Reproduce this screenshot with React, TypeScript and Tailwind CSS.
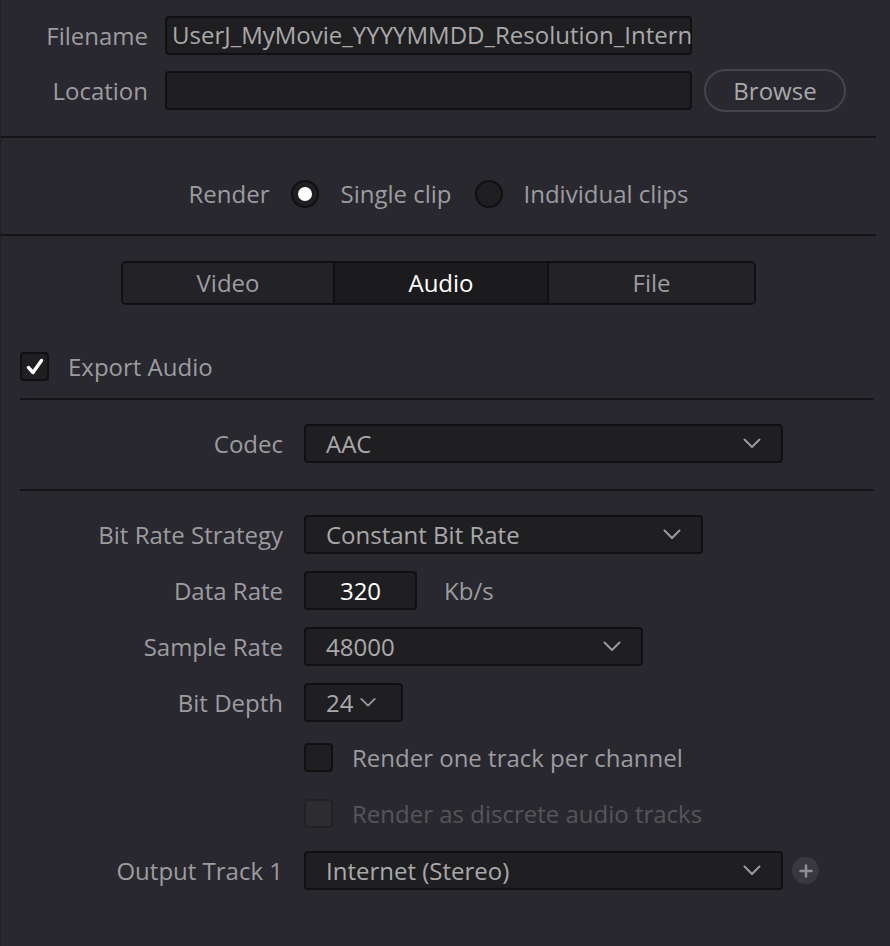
import React from 'react';

const Chevron = ({ className = '' }: { className?: string }) => (
  <svg width="18" height="11" viewBox="0 0 18 11" className={className} fill="none">
    <path d="M1.5 1.5 L9 9 L16.5 1.5" stroke="#9a9a9e" strokeWidth="2" strokeLinecap="round" strokeLinejoin="round" />
  </svg>
);

const Select = ({ value, width }: { value: string; width: string }) => (
  <div className={`${width} h-[39px] flex items-center justify-between pl-[20px] pr-[20px] bg-[#1f1f21] border-2 border-[#101012] rounded-[4px] text-[#a9a9ab]`}>
    <span>{value}</span>
    <Chevron />
  </div>
);

const Row = ({ label, children, className = '' }: { label: string; children: React.ReactNode; className?: string }) => (
  <div className={`flex items-center ${className}`}>
    <div className="w-[282px] text-right text-[#9c9ca0] shrink-0">{label}</div>
    <div className="ml-[21px] flex items-center">{children}</div>
  </div>
);

const Checkbox = ({ checked = false, disabled = false }: { checked?: boolean; disabled?: boolean }) => (
  <div
    className={`w-[29px] h-[29px] rounded-[4px] border-2 flex items-center justify-center shrink-0 ${
      disabled ? 'bg-[#2c2c31] border-[#222226]' : 'bg-[#1f1f21] border-[#101012]'
    }`}
  >
    {checked && (
      <svg width="20" height="20" viewBox="0 0 20 20" fill="none">
        <path d="M3.5 10.5 L8 15.5 L16.5 3.5" stroke="#ffffff" strokeWidth="3.4" strokeLinecap="round" strokeLinejoin="round" />
      </svg>
    )}
  </div>
);

const Radio = ({ selected = false }: { selected?: boolean }) => (
  <div className="w-[28px] h-[28px] rounded-full bg-[#1f1f21] border-2 border-[#101012] flex items-center justify-center shrink-0">
    {selected && <div className="w-[14px] h-[14px] rounded-full bg-white" />}
  </div>
);

export default function App() {
  return (
    <div
      className="w-[890px] h-[946px] bg-[#28282e] border-l border-[#1f1f24] text-[24px] leading-none overflow-hidden"
      style={{ fontFamily: '"Open Sans", "Noto Sans", sans-serif' }}
    >
      {/* file section */}
      <div className="pt-[16px]">
        <div className="flex items-center">
          <div className="w-[147px] text-right text-[#9c9ca0]">Filename</div>
          <div className="ml-[17px] w-[527px] h-[39px] bg-[#1f1f21] border-2 border-[#101012] rounded-[4px] flex items-center pl-[5px] pb-[2px] whitespace-nowrap text-[#a9a9ab]">
            UserJ_MyMovie_YYYYMMDD_Resolution_Intern
          </div>
        </div>
        <div className="flex items-center mt-[14px]">
          <div className="w-[147px] text-right text-[#9c9ca0]">Location</div>
          <div className="ml-[17px] w-[527px] h-[39px] bg-[#1f1f21] border-2 border-[#101012] rounded-[4px]" />
          <button className="ml-[12px] w-[142px] h-[43px] rounded-full border-2 border-[#44444a] text-[#a9a9ab] flex items-center justify-center">
            Browse
          </button>
        </div>
      </div>

      <div className="mt-[24px] w-[875px] h-[2px] bg-[#141416]" />

      {/* render mode */}
      <div className="w-[875px] pt-[42px] flex items-center justify-center text-[#9c9ca0]">
        <span>Render</span>
        <div className="ml-[22px]"><Radio selected /></div>
        <span className="ml-[21px]">Single clip</span>
        <div className="ml-[23px]"><Radio /></div>
        <span className="ml-[21px]">Individual clips</span>
      </div>

      <div className="mt-[26px] w-[875px] h-[2px] bg-[#141416]" />

      {/* tabs */}
      <div className="w-[875px] flex justify-center mt-[25px]">
        <div className="w-[635px] h-[44px] flex border-2 border-[#101012] rounded-[5px] overflow-hidden">
          <div className="w-[210px] flex items-center justify-center bg-[#232327] text-[#9c9ca0]">Video</div>
          <div className="w-[214px] flex items-center justify-center bg-[#1b1b1e] text-white border-l-2 border-[#101012]">Audio</div>
          <div className="flex-1 flex items-center justify-center bg-[#232327] text-[#9c9ca0] border-l-2 border-[#101012]">File</div>
        </div>
      </div>

      {/* export audio */}
      <div className="flex items-center mt-[47px] ml-[19px]">
        <Checkbox checked />
        <span className="ml-[19px] text-[#9c9ca0]">Export Audio</span>
      </div>

      <div className="mt-[17px] ml-[19px] w-[854px] h-[2px] bg-[#141416]" />

      <Row label="Codec" className="mt-[24px]">
        <Select value="AAC" width="w-[479px]" />
      </Row>

      <div className="mt-[26px] ml-[19px] w-[854px] h-[2px] bg-[#141416]" />

      <Row label="Bit Rate Strategy" className="mt-[24px]">
        <Select value="Constant Bit Rate" width="w-[399px]" />
      </Row>

      <Row label="Data Rate" className="mt-[17px]">
        <div className="w-[113px] h-[39px] bg-[#1f1f21] border-2 border-[#101012] rounded-[4px] flex items-center justify-center text-white">
          320
        </div>
        <span className="ml-[27px] text-[#9c9ca0]">Kb/s</span>
      </Row>

      <Row label="Sample Rate" className="mt-[17px]">
        <Select value="48000" width="w-[339px]" />
      </Row>

      <Row label="Bit Depth" className="mt-[17px]">
        <div className="w-[99px] h-[39px] bg-[#1f1f21] border-2 border-[#101012] rounded-[4px] flex items-center pl-[20px] text-[#a9a9ab]">
          <span>24</span>
          <Chevron className="ml-[6px] scale-90" />
        </div>
      </Row>

      <Row label="" className="mt-[21px]">
        <Checkbox />
        <span className="ml-[19px] text-[#9c9ca0]">Render one track per channel</span>
      </Row>

      <Row label="" className="mt-[27px]">
        <Checkbox disabled />
        <span className="ml-[19px] text-[#55555a]">Render as discrete audio tracks</span>
      </Row>

      <Row label="Output Track 1" className="mt-[23px]">
        <Select value="Internet (Stereo)" width="w-[479px]" />
        <div className="ml-[9px] w-[27px] h-[27px] rounded-full bg-[#38383e] flex items-center justify-center">
          <svg width="14" height="14" viewBox="0 0 14 14">
            <path d="M7 1.5 V12.5 M1.5 7 H12.5" stroke="#8e8e93" strokeWidth="2.6" strokeLinecap="round" />
          </svg>
        </div>
      </Row>
    </div>
  );
}
